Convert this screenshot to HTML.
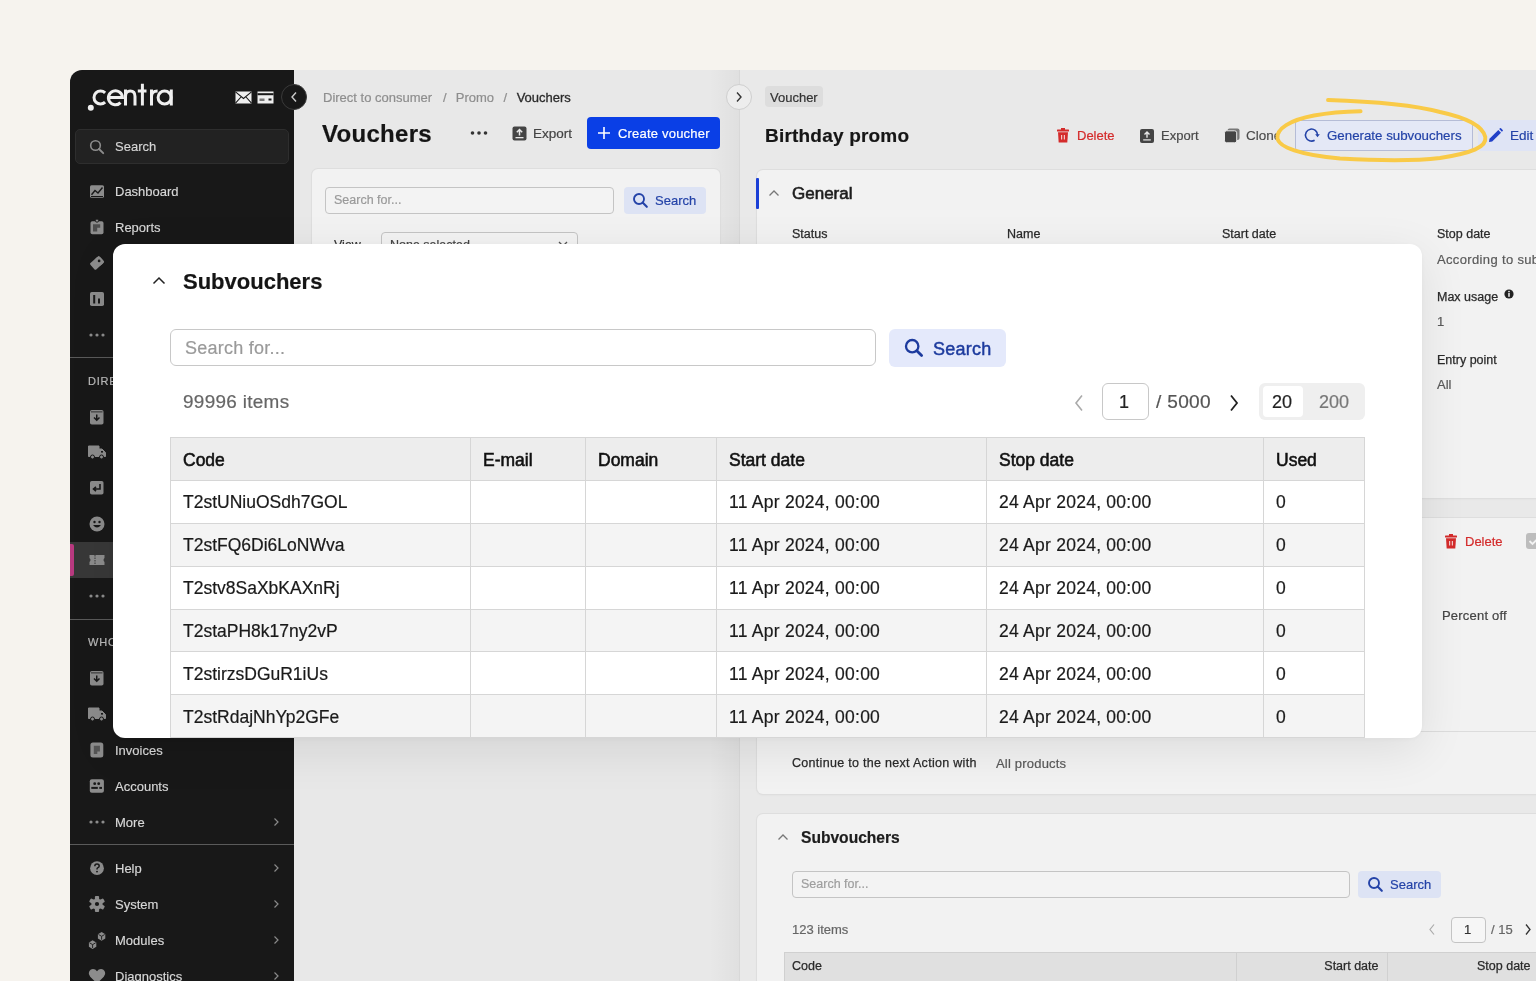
<!DOCTYPE html>
<html><head><meta charset="utf-8">
<style>
*{box-sizing:border-box;margin:0;padding:0}
html,body{width:1536px;height:981px;overflow:hidden}
#root{position:absolute;left:0;top:0;width:1536px;height:981px;will-change:transform}
body{background:#f6f3ee;font-family:"Liberation Sans",sans-serif;position:relative;color:#1a1a1a}
.abs{position:absolute}
.t{position:absolute;white-space:nowrap;line-height:1;-webkit-text-stroke-width:0.2px}
.st{-webkit-text-stroke-width:0.15px}
#win{position:absolute;left:70px;top:70px;width:1500px;height:940px;border-radius:12px 0 0 0;overflow:hidden;background:#e8e8e8}
#side{position:absolute;left:0;top:0;width:224px;height:940px;background:#181818}
#mid{position:absolute;left:224px;top:0;width:445px;height:940px;background:#e8e8e8}
#right{position:absolute;left:669px;top:0;width:900px;height:940px;background:#e9e9e9;border-left:1px solid #d8d8d8}
.card{position:absolute;background:#f2f2f2;border-radius:6px;box-shadow:0 0 0 1px #dedede,0 1px 3px rgba(0,0,0,.05)}
.si{position:absolute;left:20px;width:14px;height:14px}
.st{position:absolute;left:45px;font-size:13px;color:#d8d8d8;line-height:1}
#modal{position:absolute;left:113px;top:244px;width:1309px;height:494px;background:#fff;border-radius:12px;overflow:hidden;box-shadow:0 12px 48px rgba(0,0,0,.09),0 1px 4px rgba(0,0,0,.03)}
table{border-collapse:separate;border-spacing:0;position:absolute;left:57px;top:193px;width:1195px;table-layout:fixed;border-top:1px solid #d6d6d6;border-left:1px solid #d6d6d6}
td.d{letter-spacing:0.25px}
td{-webkit-text-stroke:0.2px #1a1a1a}
td,th{border-right:1px solid #d6d6d6;border-bottom:1px solid #d6d6d6;height:42.85px;padding:2px 12px 0;text-align:left;font-size:17.5px;font-weight:400;color:#1a1a1a;white-space:nowrap}
th{background:#ededed;font-weight:400;font-size:17.5px;-webkit-text-stroke:0.55px #111;color:#111;height:43px}
tr.g td{background:#f4f4f4}
</style></head><body><div id="root">
<div id="win">
  <div id="side">
<svg class="abs" style="left:14px;top:10px" width="96" height="34" viewBox="0 0 96 34"><g fill="none" stroke="#efefef" stroke-width="3"><path d="M21.1 12.9 A6.5 6.5 0 1 0 21.1 22.1"/><path d="M25 17.5 H38.4 A7 7 0 1 0 36.5 22.6"/><path d="M41.5 9.4 V25.6 M41.5 16.5 C41.5 12.8 43.5 10.9 46.3 10.9 C49 10.9 51 12.8 51 16.5 V25.6"/><path d="M58.4 3.8 V25.6 M53.8 11 H62.5"/><path d="M67.5 9.4 V25.6 M67.5 16.5 C67.5 12.8 69.5 10.9 73.6 10.9"/><circle cx="80.6" cy="17.5" r="6.5"/><path d="M87.3 9.4 V25.6"/></g><circle cx="6.8" cy="27.8" r="3" fill="#efefef"/></svg>
<svg class="abs" style="left:165px;top:21px" width="17" height="13" viewBox="0 0 17 13"><rect x="0.5" y="0.5" width="16" height="12" fill="#eee"/><path d="M0.5 0.8 L8.5 7.5 L16.5 0.8 M0.5 12.2 L6 6 M16.5 12.2 L11 6" fill="none" stroke="#181818" stroke-width="1.1"/></svg>
<svg class="abs" style="left:187px;top:21px" width="17" height="13" viewBox="0 0 17 13"><rect x="0.5" y="0.5" width="16" height="12" fill="#eee"/><rect x="0.5" y="2.2" width="16" height="2" fill="#181818"/><rect x="2.5" y="7.5" width="5" height="2.5" fill="#777"/><rect x="11.5" y="7.5" width="3" height="2" fill="#181818"/></svg>
<div class="abs" style="left:5px;top:59px;width:214px;height:35px;background:#222;border:1px solid #2e2e2e;border-radius:5px"></div>
<svg class="abs" style="left:19px;top:69px" width="16" height="16" viewBox="0 0 16 16"><circle cx="6.5" cy="6.5" r="4.8" fill="none" stroke="#8c8c8c" stroke-width="1.6"/><path d="M10 10 L14.2 14.2" stroke="#8c8c8c" stroke-width="1.9" stroke-linecap="round"/></svg>
<div class="st" style="top:70px;color:#d6d6d6">Search</div>
<svg class="abs" style="left:18px;top:112px" width="18" height="18" viewBox="0 0 18 18"><rect x="2" y="3.3" width="14" height="12.5" rx="1.5" fill="#8c8c8c"/><path d="M3.5 12.8 L7 8.5 L10 11 L14.5 5.5" fill="none" stroke="#181818" stroke-width="1.4"/><rect x="3" y="14" width="12" height="1" fill="#181818"/></svg><div class="st" style="top:114.8px">Dashboard</div>
<svg class="abs" style="left:18px;top:148px" width="18" height="18" viewBox="0 0 18 18"><rect x="2.5" y="3.2" width="13" height="13" rx="1.8" fill="#8c8c8c"/><circle cx="9" cy="2.6" r="1.6" fill="#8c8c8c" stroke="#181818" stroke-width="0.9"/><path d="M5 6.3 H12.2 V9.8 H9.2 V13.4 H5 Z" fill="#4d4d4d"/></svg><div class="st" style="top:150.8px">Reports</div>
<svg class="abs" style="left:18px;top:184px" width="18" height="18" viewBox="0 0 18 18"><g transform="rotate(-42 9 9)"><rect x="2.9" y="4.7" width="12.4" height="8.6" rx="1.2" fill="#8c8c8c"/><rect x="8" y="4.7" width="7.3" height="8.6" rx="3" fill="#8c8c8c"/></g><circle cx="11.1" cy="6.9" r="1.35" fill="#181818"/></svg>
<svg class="abs" style="left:18px;top:220px" width="18" height="18" viewBox="0 0 18 18"><rect x="2" y="2" width="14" height="14" rx="1.8" fill="#8c8c8c"/><rect x="5.2" y="5" width="2" height="8.5" fill="#181818"/><rect x="10" y="8.5" width="2" height="5" fill="#181818"/></svg>
<svg class="abs" style="left:18px;top:256px" width="18" height="18" viewBox="0 0 18 18"><circle cx="3" cy="9" r="1.6" fill="#8c8c8c"/><circle cx="9" cy="9" r="1.6" fill="#8c8c8c"/><circle cx="15" cy="9" r="1.6" fill="#8c8c8c"/></svg>
<div class="abs" style="left:0;top:287px;width:224px;height:1px;background:#5a5a5a"></div>
<div class="t" style="left:18px;top:306px;font-size:11px;color:#bbb;letter-spacing:0.8px">DIRE</div>
<svg class="abs" style="left:18px;top:338px" width="18" height="18" viewBox="0 0 18 18"><rect x="2" y="2" width="13.5" height="14.5" rx="1.8" fill="#8c8c8c"/><rect x="3" y="3.5" width="11.5" height="0.8" fill="#181818"/><path d="M8.75 6.5 V12 M6 9.5 L8.75 12.3 L11.5 9.5" fill="none" stroke="#181818" stroke-width="1.5"/></svg>
<svg class="abs" style="left:18px;top:373px" width="18" height="18" viewBox="0 0 18 18"><path d="M0.5 3 H11 V6 H14 L17.5 9.5 V13.5 H0.5 Z" fill="#8c8c8c" stroke="#8c8c8c" stroke-linejoin="round"/><circle cx="4.5" cy="14" r="2" fill="#8c8c8c" stroke="#181818" stroke-width="1"/><circle cx="13.5" cy="14" r="2" fill="#8c8c8c" stroke="#181818" stroke-width="1"/><rect x="13" y="8" width="2" height="1.6" fill="#181818"/></svg>
<svg class="abs" style="left:18px;top:409px" width="18" height="18" viewBox="0 0 18 18"><rect x="2" y="2" width="13.5" height="13.5" rx="1.8" fill="#8c8c8c"/><path d="M12 5 V10 H6 M8 7.8 L5.5 10 L8 12.2" fill="none" stroke="#181818" stroke-width="1.6"/></svg>
<svg class="abs" style="left:18px;top:445px" width="18" height="18" viewBox="0 0 18 18"><circle cx="9" cy="9" r="7.5" fill="#8c8c8c"/><circle cx="6.5" cy="7" r="1.2" fill="#181818"/><circle cx="11.5" cy="7" r="1.2" fill="#181818"/><path d="M5 10 Q9 15 13 10 Z" fill="#181818"/></svg>
<div class="abs" style="left:0;top:472px;width:224px;height:36px;background:#383838"></div><div class="abs" style="left:0;top:474px;width:4px;height:32px;background:#b8397f;border-radius:0 2px 2px 0"></div>
<svg class="abs" style="left:18px;top:481px" width="18" height="18" viewBox="0 0 18 18"><path d="M1.5 4 H16.5 V7 Q14.5 9 16.5 11 V14 H1.5 V11 Q3.5 9 1.5 7 Z" fill="#8c8c8c"/><path d="M7 4 V14" stroke="#383838" stroke-width="1" stroke-dasharray="1.5 1"/></svg>
<svg class="abs" style="left:18px;top:517px" width="18" height="18" viewBox="0 0 18 18"><circle cx="3" cy="9" r="1.6" fill="#8c8c8c"/><circle cx="9" cy="9" r="1.6" fill="#8c8c8c"/><circle cx="15" cy="9" r="1.6" fill="#8c8c8c"/></svg>
<div class="abs" style="left:0;top:549px;width:224px;height:1px;background:#5a5a5a"></div>
<div class="t" style="left:18px;top:567px;font-size:11px;color:#bbb;letter-spacing:0.8px">WHO</div>
<svg class="abs" style="left:18px;top:599px" width="18" height="18" viewBox="0 0 18 18"><rect x="2" y="2" width="13.5" height="14.5" rx="1.8" fill="#8c8c8c"/><rect x="3" y="3.5" width="11.5" height="0.8" fill="#181818"/><path d="M8.75 6.5 V12 M6 9.5 L8.75 12.3 L11.5 9.5" fill="none" stroke="#181818" stroke-width="1.5"/></svg>
<svg class="abs" style="left:18px;top:635px" width="18" height="18" viewBox="0 0 18 18"><path d="M0.5 3 H11 V6 H14 L17.5 9.5 V13.5 H0.5 Z" fill="#8c8c8c" stroke="#8c8c8c" stroke-linejoin="round"/><circle cx="4.5" cy="14" r="2" fill="#8c8c8c" stroke="#181818" stroke-width="1"/><circle cx="13.5" cy="14" r="2" fill="#8c8c8c" stroke="#181818" stroke-width="1"/><rect x="13" y="8" width="2" height="1.6" fill="#181818"/></svg>
<svg class="abs" style="left:18px;top:671px" width="18" height="18" viewBox="0 0 18 18"><rect x="2.4" y="1.4" width="12.9" height="15" rx="2.5" fill="#8c8c8c"/><path d="M5.8 4.8 H11.9 V10.4 H9.3 V13 H5.8 Z" fill="#555"/></svg><div class="st" style="top:673.8px">Invoices</div>
<svg class="abs" style="left:18px;top:707px" width="18" height="18" viewBox="0 0 18 18"><rect x="1.8" y="2.2" width="14.1" height="13.5" rx="2" fill="#8c8c8c"/><circle cx="6.7" cy="6.7" r="1.4" fill="#181818"/><circle cx="10.7" cy="6.7" r="1.4" fill="#181818"/><rect x="3.3" y="9.9" width="6.5" height="2" fill="#181818"/><rect x="11.3" y="9.9" width="2.7" height="2" fill="#181818"/></svg><div class="st" style="top:709.8px">Accounts</div>
<svg class="abs" style="left:18px;top:743px" width="18" height="18" viewBox="0 0 18 18"><circle cx="3" cy="9" r="1.6" fill="#8c8c8c"/><circle cx="9" cy="9" r="1.6" fill="#8c8c8c"/><circle cx="15" cy="9" r="1.6" fill="#8c8c8c"/></svg><div class="st" style="top:745.8px">More</div><svg class="abs" style="left:202px;top:746px" width="8" height="12" viewBox="0 0 8 12"><path d="M2.5 2.5 L6 6 L2.5 9.5" fill="none" stroke="#8a8a8a" stroke-width="1.2"/></svg>
<div class="abs" style="left:0;top:774px;width:224px;height:1px;background:#5a5a5a"></div>
<svg class="abs" style="left:18px;top:789px" width="18" height="18" viewBox="0 0 18 18"><circle cx="9" cy="9.2" r="6.9" fill="#8c8c8c"/><path d="M6.8 7.2 Q6.8 5 9 5 Q11.2 5 11.2 7 Q11.2 8.2 9.6 8.9 Q9 9.2 9 10.4" fill="none" stroke="#181818" stroke-width="1.5"/><circle cx="9" cy="12.6" r="0.95" fill="#181818"/></svg><div class="st" style="top:791.8px">Help</div><svg class="abs" style="left:202px;top:792px" width="8" height="12" viewBox="0 0 8 12"><path d="M2.5 2.5 L6 6 L2.5 9.5" fill="none" stroke="#8a8a8a" stroke-width="1.2"/></svg>
<svg class="abs" style="left:18px;top:825px" width="18" height="18" viewBox="0 0 18 18"><g fill="#8c8c8c"><circle cx="9" cy="9" r="5.6"/><rect x="6.9" y="0.9" width="4.2" height="4.4" rx="1" transform="rotate(0 9 9)"/><rect x="6.9" y="0.9" width="4.2" height="4.4" rx="1" transform="rotate(60 9 9)"/><rect x="6.9" y="0.9" width="4.2" height="4.4" rx="1" transform="rotate(120 9 9)"/><rect x="6.9" y="0.9" width="4.2" height="4.4" rx="1" transform="rotate(180 9 9)"/><rect x="6.9" y="0.9" width="4.2" height="4.4" rx="1" transform="rotate(240 9 9)"/><rect x="6.9" y="0.9" width="4.2" height="4.4" rx="1" transform="rotate(300 9 9)"/></g><circle cx="9" cy="9" r="2.1" fill="#181818"/></svg><div class="st" style="top:827.8px">System</div><svg class="abs" style="left:202px;top:828px" width="8" height="12" viewBox="0 0 8 12"><path d="M2.5 2.5 L6 6 L2.5 9.5" fill="none" stroke="#8a8a8a" stroke-width="1.2"/></svg>
<svg class="abs" style="left:18px;top:861px" width="18" height="18" viewBox="0 0 18 18"><path d="M0.9 11.5 L4.6 9.3 L8.3 11.5 V15.8 L4.6 18 L0.9 15.8 Z" fill="#8c8c8c"/><path d="M9.9 3.2 L13.6 1 L17.3 3.2 V7.5 L13.6 9.7 L9.9 7.5 Z" fill="#8c8c8c"/><path d="M1.5 11.8 L4.6 13.6 L7.7 11.8 M4.6 13.6 V17 M10.5 3.5 L13.6 5.3 L16.7 3.5 M13.6 5.3 V8.7" fill="none" stroke="#181818" stroke-width="0.9"/></svg><div class="st" style="top:863.8px">Modules</div><svg class="abs" style="left:202px;top:864px" width="8" height="12" viewBox="0 0 8 12"><path d="M2.5 2.5 L6 6 L2.5 9.5" fill="none" stroke="#8a8a8a" stroke-width="1.2"/></svg>
<svg class="abs" style="left:18px;top:897px" width="18" height="18" viewBox="0 0 18 18"><path d="M9 16.5 L2.2 9.8 Q0 7.5 1 5 Q2.2 2 5 2 Q7.5 2 9 4.2 Q10.5 2 13 2 Q15.8 2 17 5 Q18 7.5 15.8 9.8 Z" fill="#8c8c8c"/></svg><div class="st" style="top:899.8px">Diagnostics</div><svg class="abs" style="left:202px;top:900px" width="8" height="12" viewBox="0 0 8 12"><path d="M2.5 2.5 L6 6 L2.5 9.5" fill="none" stroke="#8a8a8a" stroke-width="1.2"/></svg>
  </div>
  <div id="mid">
<div class="abs" style="right:0;top:0;width:30px;height:940px;background:linear-gradient(to right,rgba(0,0,0,0),rgba(0,0,0,0.035))"></div>
<div class="t" style="left:29px;top:21px;font-size:13px;color:#8e8e8e">Direct to consumer<span style="margin:0 0 0 11px">/</span><span style="margin-left:9px">Promo</span><span style="margin-left:9.5px">/</span><span style="margin-left:9.5px;color:#2b2b2b;-webkit-text-stroke:0.3px #2b2b2b">Vouchers</span></div>
<div class="t" style="left:28px;top:51.5px;font-size:24px;font-weight:700;color:#151515;letter-spacing:0.3px">Vouchers</div>
<svg class="abs" style="left:176px;top:60px" width="18" height="6" viewBox="0 0 18 6"><circle cx="2.5" cy="3" r="1.8" fill="#333"/><circle cx="9" cy="3" r="1.8" fill="#333"/><circle cx="15.5" cy="3" r="1.8" fill="#333"/></svg>
<svg class="abs" style="left:218px;top:56px" width="15" height="15" viewBox="0 0 15 15"><rect x="0.5" y="0.5" width="14" height="14" rx="2" fill="#444"/><path d="M7.5 3.5 V9.5 M4.8 6.2 L7.5 3.5 L10.2 6.2" fill="none" stroke="#e8e8e8" stroke-width="1.5"/><rect x="3.5" y="11" width="8" height="1.3" fill="#e8e8e8"/></svg>
<div class="t" style="left:239px;top:57px;font-size:13.5px;color:#444">Export</div>
<div class="abs" style="left:293px;top:47px;width:133px;height:32px;background:#0a3fe6;border-radius:4px"></div>
<svg class="abs" style="left:303px;top:56px" width="14" height="14" viewBox="0 0 14 14"><path d="M7 1 V13 M1 7 H13" stroke="#fff" stroke-width="1.6"/></svg>
<div class="t" style="left:324px;top:57px;font-size:13px;color:#fff;letter-spacing:0.2px">Create voucher</div>
<div class="card" style="left:18px;top:99px;width:408px;height:120px"></div>
<div class="abs" style="left:31px;top:117px;width:289px;height:27px;border:1px solid #c4c4c4;border-radius:4px;background:#f3f3f3"></div>
<div class="t" style="left:40px;top:124px;font-size:12.5px;color:#9a9a9a">Search for...</div>
<div class="abs" style="left:330px;top:117px;width:82px;height:27px;background:#dde3f4;border-radius:4px"></div>
<svg class="abs" style="left:338px;top:122px" width="17" height="17" viewBox="0 0 17 17"><circle cx="7" cy="7" r="5" fill="none" stroke="#2443a8" stroke-width="1.9"/><path d="M10.6 10.6 L14.8 14.8" stroke="#2443a8" stroke-width="2.1" stroke-linecap="round"/></svg>
<div class="t" style="left:361px;top:124px;font-size:13px;color:#2443a8">Search</div>
<div class="t" style="left:40px;top:169px;font-size:12.5px;color:#333">View</div>
<div class="abs" style="left:87px;top:162px;width:197px;height:27px;border:1px solid #c4c4c4;border-radius:4px;background:#f3f3f3"></div>
<div class="t" style="left:96px;top:169px;font-size:12.5px;color:#444">None selected</div><svg class="abs" style="left:264px;top:171px" width="10" height="6" viewBox="0 0 10 6"><path d="M1 1 L5 5 L9 1" fill="none" stroke="#555" stroke-width="1.3"/></svg><div style="display:none"></div>
  </div>
  <div id="right">
<div class="abs" style="left:25px;top:16px;width:58px;height:21px;background:#dddddd;border-radius:4px"></div>
<div class="t" style="left:30px;top:20.9px;font-size:13px;color:#333;font-weight:400;">Voucher</div>
<div class="t" style="left:25px;top:56px;font-size:19px;font-weight:700;color:#161616;letter-spacing:0.2px">Birthday promo</div>
<svg class="abs" style="left:316px;top:58px" width="14" height="15" viewBox="0 0 14 15"><rect x="1" y="1.5" width="12" height="2" rx="0.5" fill="#d42b2b"/><rect x="5" y="0" width="4" height="2" fill="#d42b2b"/><path d="M2 4.3 H12 L11.3 14.5 H2.7 Z" fill="#d42b2b"/><rect x="5" y="7" width="1.2" height="4.5" fill="#f3c6c6"/><rect x="7.8" y="7" width="1.2" height="4.5" fill="#f3c6c6"/></svg>
<div class="t" style="left:337px;top:59.0px;font-size:13px;color:#d42b2b;font-weight:400;">Delete</div>
<svg class="abs" style="left:400px;top:58.5px" width="14" height="14" viewBox="0 0 14 14"><rect x="0" y="0" width="14" height="14" rx="2" fill="#444"/><path d="M7 3 V8.8 M4.5 5.5 L7 3 L9.5 5.5" fill="none" stroke="#e9e9e9" stroke-width="1.4"/><rect x="3.2" y="10.3" width="7.6" height="1.2" fill="#e9e9e9"/></svg>
<div class="t" style="left:421px;top:59.0px;font-size:13px;color:#4a4a4a;font-weight:400;">Export</div>
<svg class="abs" style="left:484px;top:57.5px" width="16" height="15" viewBox="0 0 16 15"><rect x="3.5" y="0.5" width="12" height="11.5" rx="2" fill="#777"/><rect x="0.5" y="2.8" width="12.2" height="12" rx="2" fill="#444" stroke="#e9e9e9" stroke-width="1"/></svg>
<div class="t" style="left:506px;top:57px;height:18px;width:32px;overflow:hidden;font-size:13.5px;padding-top:2px;color:#4a4a4a;-webkit-text-stroke:0.15px #4a4a4a">Clone</div>
<div class="abs" style="left:555px;top:50px;width:178px;height:31px;background:#e4e8f6;border:1px solid #b5bcd6;border-radius:3px"></div>
<svg class="abs" style="left:563px;top:57px" width="18" height="18" viewBox="0 0 18 18"><path d="M14.5 8 A6 6 0 1 0 11.6 13.2" fill="none" stroke="#2443a8" stroke-width="1.6"/><path d="M12.2 7.2 L16.8 7.2 L14.5 10.2 Z" fill="#2443a8"/></svg>
<div class="t" style="left:587px;top:58.7px;font-size:13.3px;color:#2443a8;font-weight:400;">Generate subvouchers</div>
<div class="abs" style="left:738px;top:50px;width:80px;height:31px;background:#dfe4f5;border-radius:3px"></div>
<svg class="abs" style="left:748px;top:58px" width="15" height="15" viewBox="0 0 15 15"><path d="M1 14 L1.5 10.8 L10.3 2 L13 4.7 L4.2 13.5 Z" fill="#2140c8"/><path d="M11.2 1.1 L12 0.3 Q12.5 -0.1 13 0.3 L14.7 2 Q15.1 2.5 14.7 3 L13.9 3.8 Z" fill="#2140c8"/></svg>
<div class="t" style="left:770px;top:58.6px;font-size:13.5px;color:#2443a8;font-weight:400;">Edit</div>
<div class="card" style="left:16.5px;top:99.5px;width:900px;height:328px"></div>
<div class="abs" style="left:16px;top:108px;width:3px;height:31px;background:#1a3fd6;border-radius:1px"></div>
<svg class="abs" style="left:28px;top:119px" width="12" height="8" viewBox="0 0 12 8"><path d="M1.5 6.5 L6 2 L10.5 6.5" fill="none" stroke="#777" stroke-width="1.3"/></svg>
<div class="t" style="left:52px;top:115.3px;font-size:17px;font-weight:400;color:#1d1d1d;-webkit-text-stroke:0.6px #1d1d1d">General</div>
<div class="t" style="left:52px;top:157.9px;font-size:12.5px;color:#2a2a2a;font-weight:400;-webkit-text-stroke:0.25px #2a2a2a">Status</div>
<div class="t" style="left:267px;top:157.9px;font-size:12.5px;color:#2a2a2a;font-weight:400;-webkit-text-stroke:0.25px #2a2a2a">Name</div>
<div class="t" style="left:482px;top:157.9px;font-size:12.5px;color:#2a2a2a;font-weight:400;-webkit-text-stroke:0.25px #2a2a2a">Start date</div>
<div class="t" style="left:697px;top:157.9px;font-size:12.5px;color:#2a2a2a;font-weight:400;-webkit-text-stroke:0.25px #2a2a2a">Stop date</div>
<div class="t" style="left:697px;top:182.6px;font-size:13px;color:#5a5a5a;letter-spacing:0.35px">According to subvouchers</div>
<div class="t" style="left:697px;top:220.9px;font-size:12.5px;color:#2a2a2a;font-weight:400;-webkit-text-stroke:0.25px #2a2a2a">Max usage</div>
<svg class="abs" style="left:764px;top:219px" width="10" height="10" viewBox="0 0 10 10"><circle cx="5" cy="5" r="4.6" fill="#222"/><rect x="4.3" y="4" width="1.4" height="3.8" fill="#fff"/><circle cx="5" cy="2.6" r="0.8" fill="#fff"/></svg>
<div class="t" style="left:697px;top:244.6px;font-size:13px;color:#5a5a5a">1</div>
<div class="t" style="left:697px;top:283.9px;font-size:12.5px;color:#2a2a2a;font-weight:400;-webkit-text-stroke:0.25px #2a2a2a">Entry point</div>
<div class="t" style="left:697px;top:307.6px;font-size:13px;color:#5a5a5a">All</div>
<div class="card" style="left:16.5px;top:448px;width:900px;height:276px"></div>
<div class="abs" style="left:17px;top:661px;width:900px;height:1px;background:#dcdcdc"></div>
<svg class="abs" style="left:704px;top:464px" width="14" height="15" viewBox="0 0 14 15"><rect x="1" y="1.5" width="12" height="2" rx="0.5" fill="#d42b2b"/><rect x="5" y="0" width="4" height="2" fill="#d42b2b"/><path d="M2 4.3 H12 L11.3 14.5 H2.7 Z" fill="#d42b2b"/><rect x="5" y="7" width="1.2" height="4.5" fill="#f3c6c6"/><rect x="7.8" y="7" width="1.2" height="4.5" fill="#f3c6c6"/></svg>
<div class="t" style="left:725px;top:465.0px;font-size:13px;color:#d42b2b;font-weight:400;">Delete</div>
<div class="abs" style="left:786px;top:463px;width:16px;height:16px;background:#bdbdbd;border-radius:3px"></div><svg class="abs" style="left:788px;top:466px" width="12" height="10" viewBox="0 0 12 10"><path d="M1.5 5 L4.5 8 L10.5 2" fill="none" stroke="#f2f2f2" stroke-width="1.8"/></svg>
<div class="t" style="left:702px;top:539.1px;font-size:13px;color:#444;letter-spacing:0.2px">Percent off</div>
<div class="t" style="left:52px;top:687.4px;font-size:12.5px;color:#2a2a2a;font-weight:400;-webkit-text-stroke:0.25px #2a2a2a;letter-spacing:0.3px">Continue to the next Action with</div>
<div class="t" style="left:256px;top:687.1px;font-size:13px;color:#5a5a5a;letter-spacing:0.2px">All products</div>
<div class="card" style="left:16.5px;top:743.5px;width:900px;height:300px"></div>
<svg class="abs" style="left:37px;top:763px" width="12" height="8" viewBox="0 0 12 8"><path d="M1.5 6.5 L6 2 L10.5 6.5" fill="none" stroke="#777" stroke-width="1.3"/></svg>
<div class="t" style="left:61px;top:760px;font-size:15.6px;font-weight:700;color:#1d1d1d">Subvouchers</div>
<div class="abs" style="left:52px;top:801px;width:558px;height:27px;border:1px solid #c4c4c4;border-radius:4px;background:#f3f3f3"></div>
<div class="t" style="left:61px;top:807.9px;font-size:12.5px;color:#9e9e9e;font-weight:400;">Search for...</div>
<div class="abs" style="left:618px;top:801px;width:83px;height:27px;background:#dde3f4;border-radius:4px"></div>
<svg class="abs" style="left:627px;top:806px" width="17" height="17" viewBox="0 0 17 17"><circle cx="7" cy="7" r="5" fill="none" stroke="#2443a8" stroke-width="1.9"/><path d="M10.6 10.6 L14.8 14.8" stroke="#2443a8" stroke-width="2.1" stroke-linecap="round"/></svg>
<div class="t" style="left:650px;top:807.6px;font-size:13px;color:#2443a8;font-weight:400;">Search</div>
<div class="t" style="left:52px;top:853.0px;font-size:13px;color:#666;font-weight:400;">123 items</div>
<svg class="abs" style="left:688px;top:853px" width="8" height="13" viewBox="0 0 8 13"><path d="M6 1.5 L2 6.5 L6 11.5" fill="none" stroke="#aaa" stroke-width="1.2"/></svg>
<div class="abs" style="left:711px;top:847px;width:35px;height:26px;border:1px solid #c4c4c4;border-radius:4px;background:#f6f6f6"></div>
<div class="t" style="left:724px;top:853.2px;font-size:13px;color:#333;font-weight:400;">1</div>
<div class="t" style="left:751px;top:853.2px;font-size:13px;color:#666;font-weight:400;">/ 15</div>
<svg class="abs" style="left:784px;top:853px" width="8" height="13" viewBox="0 0 8 13"><path d="M2 1.5 L6 6.5 L2 11.5" fill="none" stroke="#333" stroke-width="1.3"/></svg>
<div class="abs" style="left:43.5px;top:882px;width:800px;height:40px;background:#e0e0e0;border:1px solid #d0d0d0"></div>
<div class="abs" style="left:496px;top:882px;width:1px;height:40px;background:#d0d0d0"></div>
<div class="abs" style="left:647px;top:882px;width:1px;height:40px;background:#d0d0d0"></div>
<div class="t" style="left:52px;top:890.4px;font-size:12.5px;color:#2a2a2a;font-weight:400;-webkit-text-stroke:0.25px #2a2a2a">Code</div>
<div class="t" style="left:496.5px;width:142px;text-align:right;top:890.4px;font-size:12.5px;color:#2a2a2a;-webkit-text-stroke:0.25px #2a2a2a">Start date</div>
<div class="t" style="left:737px;top:890.4px;font-size:12.5px;color:#2a2a2a;font-weight:400;-webkit-text-stroke:0.25px #2a2a2a">Stop date</div>
<svg class="abs" style="left:0;top:0;overflow:visible" width="800" height="200" viewBox="740 70 800 200"><path d="M1328 100 C1360 101 1410 104 1440 112 C1468 118 1483 127 1485.3 137 C1487 147 1472 153 1440 158 C1415 161 1385 161 1340 158.5 C1300 155 1279 147 1277.5 138.5 C1276 129 1290 120 1314 115.5 C1330 112.5 1345 111.5 1360.6 111.2" fill="none" stroke="#f9ca47" stroke-width="3.9" stroke-linecap="round"/></svg>
  </div>
<div class="abs" style="left:211px;top:14px;width:26px;height:26px;border-radius:50%;background:#181818;border:1px solid #3a3a3a"></div>
<svg class="abs" style="left:219px;top:21px" width="10" height="12" viewBox="0 0 10 12"><path d="M7 1.5 L3 6 L7 10.5" fill="none" stroke="#ccc" stroke-width="1.4"/></svg>
<div class="abs" style="left:656px;top:14px;width:26px;height:26px;border-radius:50%;background:#ededed;border:1px solid #cfcfcf"></div>
<svg class="abs" style="left:664px;top:21px" width="10" height="12" viewBox="0 0 10 12"><path d="M3 1.5 L7 6 L3 10.5" fill="none" stroke="#333" stroke-width="1.4"/></svg>
</div>
<div id="modal">
  <svg class="abs" style="left:39px;top:31px" width="14" height="10" viewBox="0 0 14 10"><path d="M1.5 8.5 L7 3 L12.5 8.5" fill="none" stroke="#222" stroke-width="1.5"/></svg>
  <div class="t" style="left:70px;top:27px;font-size:22px;font-weight:700;color:#151515">Subvouchers</div>
  <div class="abs" style="left:57px;top:85px;width:706px;height:37px;border:1px solid #c8c8c8;border-radius:6px"></div>
  <div class="t" style="left:72px;top:95px;font-size:18px;color:#9a9a9a;letter-spacing:0.25px">Search for...</div>
  <div class="abs" style="left:776px;top:85px;width:117px;height:38px;background:#e4e9fb;border-radius:6px"></div>
  <svg class="abs" style="left:790px;top:93px" width="22" height="22" viewBox="0 0 22 22"><circle cx="9.2" cy="9.2" r="6.2" fill="none" stroke="#1d3b9e" stroke-width="2.3"/><path d="M13.8 13.8 L18.6 18.6" stroke="#1d3b9e" stroke-width="2.8" stroke-linecap="round"/></svg>
  <div class="t" style="left:820px;top:96px;font-size:18px;color:#1d3b9e;letter-spacing:0.25px;-webkit-text-stroke-width:0.45px">Search</div>
  <div class="t" style="left:70px;top:149px;font-size:18px;color:#666;letter-spacing:0.3px;transform:scaleX(1.05);transform-origin:0 0;-webkit-text-stroke:0.2px #666">99996 items</div>
  <svg class="abs" style="left:961px;top:150px" width="10" height="18" viewBox="0 0 10 18"><path d="M8 1.5 L2 9 L8 16.5" fill="none" stroke="#aaa" stroke-width="1.6"/></svg>
  <div class="abs" style="left:989px;top:139px;width:47px;height:37px;border:1px solid #c8c8c8;border-radius:6px;background:#fff"></div>
  <div class="t" style="left:1006px;top:149px;font-size:18px;color:#222">1</div>
  <div class="t" style="left:1043px;top:149px;font-size:18px;color:#555;letter-spacing:0.3px;transform:scaleX(1.06);transform-origin:0 0;-webkit-text-stroke:0.2px #555">/ 5000</div>
  <svg class="abs" style="left:1116px;top:150px" width="10" height="18" viewBox="0 0 10 18"><path d="M2 1.5 L8 9 L2 16.5" fill="none" stroke="#222" stroke-width="1.8"/></svg>
  <div class="abs" style="left:1146px;top:139px;width:106px;height:37px;background:#efefef;border-radius:6px"></div>
  <div class="abs" style="left:1150px;top:142px;width:40px;height:31px;background:#fff;border-radius:4px"></div>
  <div class="t" style="left:1159px;top:149px;font-size:18px;color:#222">20</div>
  <div class="t" style="left:1206px;top:149px;font-size:18px;color:#777">200</div>
  <table>
    <colgroup><col style="width:300px"><col style="width:115px"><col style="width:131px"><col style="width:270px"><col style="width:277px"><col style="width:101px"></colgroup>
    <tr><th>Code</th><th>E-mail</th><th>Domain</th><th>Start date</th><th>Stop date</th><th>Used</th></tr>
    <tr><td>T2stUNiuOSdh7GOL</td><td></td><td></td><td class="d">11 Apr 2024, 00:00</td><td class="d">24 Apr 2024, 00:00</td><td>0</td></tr>
    <tr class="g"><td>T2stFQ6Di6LoNWva</td><td></td><td></td><td class="d">11 Apr 2024, 00:00</td><td class="d">24 Apr 2024, 00:00</td><td>0</td></tr>
    <tr><td>T2stv8SaXbKAXnRj</td><td></td><td></td><td class="d">11 Apr 2024, 00:00</td><td class="d">24 Apr 2024, 00:00</td><td>0</td></tr>
    <tr class="g"><td>T2staPH8k17ny2vP</td><td></td><td></td><td class="d">11 Apr 2024, 00:00</td><td class="d">24 Apr 2024, 00:00</td><td>0</td></tr>
    <tr><td>T2stirzsDGuR1iUs</td><td></td><td></td><td class="d">11 Apr 2024, 00:00</td><td class="d">24 Apr 2024, 00:00</td><td>0</td></tr>
    <tr class="g"><td>T2stRdajNhYp2GFe</td><td></td><td></td><td class="d">11 Apr 2024, 00:00</td><td class="d">24 Apr 2024, 00:00</td><td>0</td></tr>
  </table>
</div>
</div></body></html>
